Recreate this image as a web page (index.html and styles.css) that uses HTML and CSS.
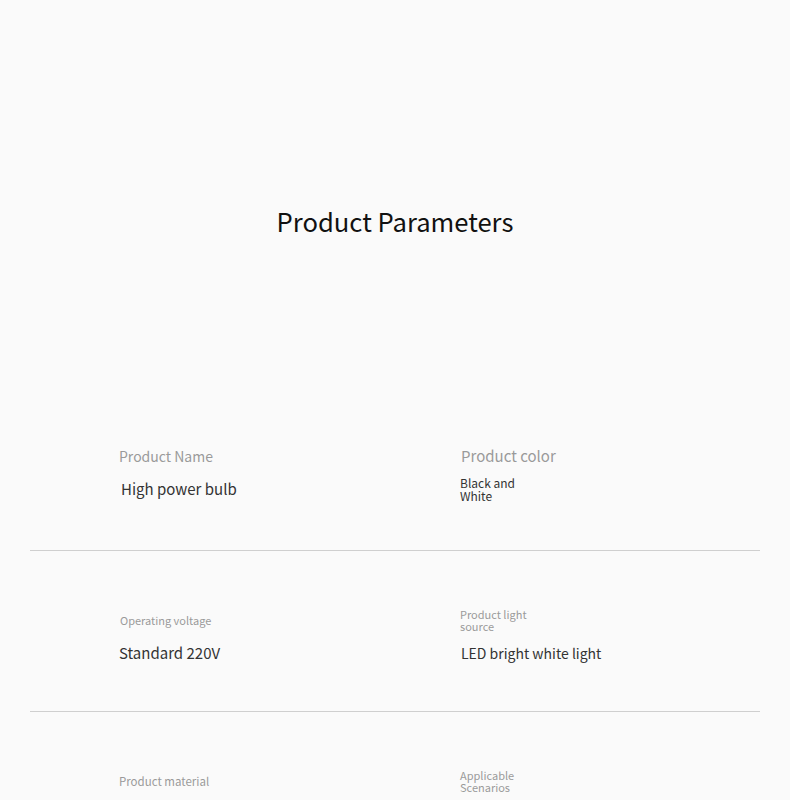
FILE: index.html
```html
<!DOCTYPE html>
<html lang="en">
<head>
<meta charset="utf-8">
<title>Product Parameters</title>
<link rel="stylesheet" href="styles.css">
</head>
<body>
<h1 class="title">Product Parameters</h1>
<div class="params">
  <div class="row row-first">
    <div class="cell">
      <div class="label fs14">Product Name</div>
      <div class="value fs15 shift">High power bulb</div>
    </div>
    <div class="cell">
      <div class="label fs15 shift1">Product color</div>
      <div class="value fs12 narrow">Black and White</div>
    </div>
  </div>
  <div class="row">
    <div class="cell">
      <div class="label fs11 shift1">Operating voltage</div>
      <div class="value fs15">Standard 220V</div>
    </div>
    <div class="cell">
      <div class="label fs11 narrow">Product light source</div>
      <div class="value fs14 shift1">LED bright white light</div>
    </div>
  </div>
  <div class="row">
    <div class="cell">
      <div class="label fs115">Product material</div>
      <div class="value fs15"></div>
    </div>
    <div class="cell">
      <div class="label fs11 narrow">Applicable Scenarios</div>
      <div class="value fs15"></div>
    </div>
  </div>
</div>
</body>
</html>
```
FILE: styles.css
```css
* { box-sizing: border-box; }
body {
  margin: 0;
  background: #fafafa;
  font-family: "Noto Sans CJK SC", "Noto Sans", sans-serif;
  color: #222;
}
.title {
  margin: 0;
  padding-top: 203px;
  font-size: 25.6px;
  line-height: 36px;
  font-weight: 400;
  text-align: center;
  color: #111;
}
.params {
  margin: 151px 30px 0;
}
.row {
  display: grid;
  grid-template-columns: 341px 1fr;
  padding-left: 89px;
  padding-top: 54px;
  height: 161px;
  border-bottom: 1px solid #cfcfcf;
}
.row-first { padding-top: 51px; }
.cell {
  display: flex;
  flex-direction: column;
  gap: 3px;
}
.label, .value {
  height: 30px;
  display: flex;
  align-items: center;
}
.label { color: #9a9a9a; }
.value { color: #333; }
.fs11 { font-size: 11px; line-height: 12px; }
.fs115 { font-size: 11.5px; line-height: 14px; }
.fs12 { font-size: 12px; line-height: 13px; }
.fs14 { font-size: 14px; line-height: 20px; }
.fs15 { font-size: 15px; line-height: 20px; }
.narrow { width: 68px; }
.shift { padding-left: 2px; }
.shift1 { padding-left: 1px; }
```
